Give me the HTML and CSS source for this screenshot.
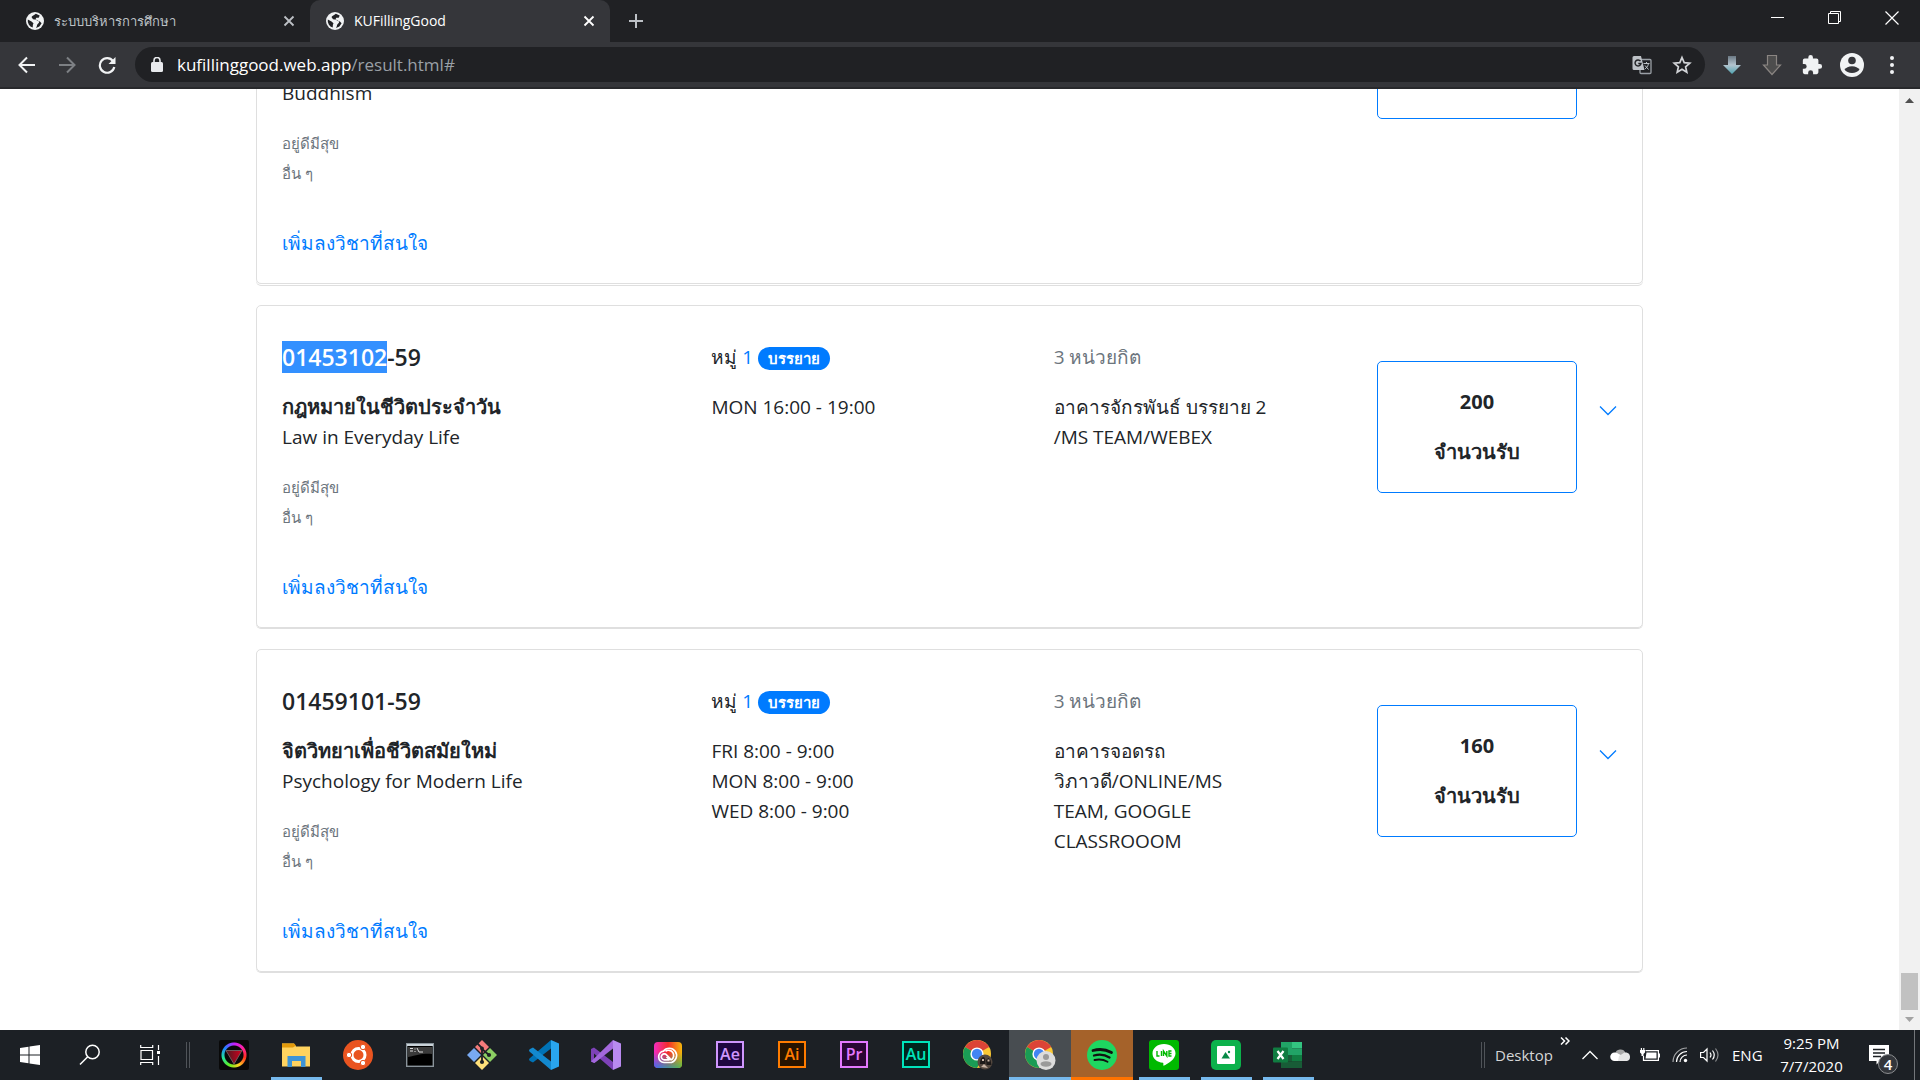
FILE: index.html
```
<!DOCTYPE html>
<html lang="th">
<head>
<meta charset="utf-8">
<title>KUFillingGood</title>
<link rel="stylesheet" href="styles.css">
</head>
<body>
<svg class="defs" width="0" height="0" aria-hidden="true">
  <symbol id="globe" viewBox="0 0 18 18"><circle cx="9" cy="9" r="9" fill="#f1f3f4"/><path d="M9.800 1.800c-1 1.400-3.300 1.400-4.300 3.200l1.500 2.200 3.500.6c1.600.6 2.500 1.500 2.500 3-1.200 1-2 1.700-2.200 3.500l-.8 1.800 3.400-1.600 2.200-3.200-1.700-1.700c-1-.6-2.300-.4-3.200-1.300l-1.200-1 .8-1.500h2.400l1-2.300zM1.800 7.500l3.700 2 2 1.700-.6 1.600-.2 2.700A7.200 7.200 0 0 1 1.800 7.500z" fill="#202124"/></symbol>
  <symbol id="close" viewBox="0 0 12 12"><path d="M1.500 1.500l9 9M10.500 1.500l-9 9" stroke="currentColor" stroke-width="1.800"/></symbol>
  <symbol id="chev" viewBox="0 0 18 12"><path d="M1 1.500l8 8 8-8" fill="none" stroke="currentColor" stroke-width="1.300"/></symbol>
  <symbol id="chrome" viewBox="0 0 30 30"><circle cx="14" cy="14" r="14" fill="#fbc934"/><path d="M14 14L1.900 7A14 14 0 0 1 26.100 7z" fill="#dc4437"/><path d="M1.900 7A14 14 0 0 0 14 28L20 17.500 14 14z" fill="#1a9c55"/><path d="M14 7h12.200l-2-2.600H9z" fill="#dc4437"/><circle cx="14" cy="14" r="6.600" fill="#fff"/><circle cx="14" cy="14" r="5.200" fill="#4285f4"/></symbol>
</svg>

<header class="browser">
  <div class="tabs">
    <div class="tab">
      <svg class="favicon"><use href="#globe"/></svg>
      <span class="tab-title">ระบบบริหารการศึกษา</span>
      <button class="tab-close" aria-label="Close tab"><svg width="12" height="12"><use href="#close"/></svg></button>
    </div>
    <div class="tab tab-active">
      <svg class="favicon"><use href="#globe"/></svg>
      <span class="tab-title">KUFillingGood</span>
      <button class="tab-close" aria-label="Close tab"><svg width="12" height="12"><use href="#close"/></svg></button>
    </div>
    <button class="new-tab" aria-label="New tab"><svg width="16" height="16" viewBox="0 0 16 16"><path d="M8 1v14M1 8h14" stroke="#bdc1c6" stroke-width="2"/></svg></button>
    <div class="window-buttons">
      <button aria-label="Minimize"><svg width="13" height="13"><path d="M0 5.500h13" stroke="#fff"/></svg></button>
      <button aria-label="Restore"><svg width="14" height="14"><path d="M.5 2.500h10v10H.5zM2.500 2.500v-2h10v10h-2" fill="none" stroke="#fff"/></svg></button>
      <button aria-label="Close"><svg width="14" height="14"><path d="M.5 .5l13 13M13.500 .5l-13 13" stroke="#fff" stroke-width="1.200"/></svg></button>
    </div>
  </div>
  <div class="toolbar">
    <button class="tool" aria-label="Back"><svg width="18" height="18" viewBox="0 0 18 18"><path d="M17 9H2M9 1.500L1.500 9 9 16.500" fill="none" stroke="#f1f3f4" stroke-width="2"/></svg></button>
    <button class="tool" aria-label="Forward"><svg width="18" height="18" viewBox="0 0 18 18"><path d="M1 9h15M9 1.500L16.500 9 9 16.500" fill="none" stroke="#7d8084" stroke-width="2"/></svg></button>
    <button class="tool" aria-label="Reload"><svg width="18" height="18" viewBox="0 0 18 18"><path d="M15 5A7.300 7.300 0 1 0 16.300 11" fill="none" stroke="#f1f3f4" stroke-width="2.200"/><path d="M17.500 1v7h-7z" fill="#f1f3f4"/></svg></button>
    <div class="omnibox">
      <svg width="12" height="15" viewBox="0 0 12 15"><rect y="5" width="12" height="10" rx="1.500" fill="#e8eaed"/><path d="M3 6V3.500a3 3 0 0 1 6 0V6" fill="none" stroke="#e8eaed" stroke-width="1.600"/></svg>
      <span class="url">kufillinggood.web.app<span class="url-path">/result.html#</span></span>
      <button class="tool" aria-label="Translate"><svg width="20" height="20" viewBox="0 0 20 20"><rect x="8" y="4.500" width="11" height="14" rx="1" fill="none" stroke="#9aa0a6" stroke-width="1.300"/><path d="M2 1h7l3.500 14H2a1.500 1.500 0 0 1-1.500-1.500v-11A1.500 1.500 0 0 1 2 1z" fill="#bdc1c6"/><path d="M8.500 6.200A3 3 0 1 0 9 8.500H6.300" fill="none" stroke="#202124" stroke-width="1.400"/><path d="M11.500 8.500h6M14.500 7v1.500M16.500 8.500c-.5 3-2.500 4.500-3.500 5.500M13 10.500l3.500 4" fill="none" stroke="#bdc1c6"/></svg></button>
      <button class="tool" aria-label="Bookmark"><svg width="20" height="20" viewBox="0 0 20 20"><path d="M10 2.500l2.200 5.100 5.600.5-4.200 3.700 1.200 5.400-4.800-2.900-4.800 2.900 1.200-5.400L2.200 8.100l5.600-.5z" fill="none" stroke="#d2d4d7" stroke-width="1.700"/></svg></button>
    </div>
    <button class="tool" aria-label="Download"><svg width="20" height="20" viewBox="0 0 20 20"><defs><linearGradient id="dl" x1="0" y1="0" x2="0" y2="1"><stop offset="0" stop-color="#6b7883"/><stop offset=".5" stop-color="#b3c4cf"/><stop offset="1" stop-color="#4fa3b0"/></linearGradient></defs><path d="M6 1h8v9h5l-9 9-9-9h5z" fill="url(#dl)"/></svg></button>
    <button class="tool" aria-label="Downloads"><svg width="20" height="22" viewBox="0 0 20 22"><path d="M5.500 1.500h9V11h4L10 20.500 1.500 11h4z" fill="#4d4d4d" stroke="#8a8582" stroke-width="1.200"/></svg></button>
    <button class="tool" aria-label="Extensions"><svg width="22" height="22" viewBox="0 0 24 24"><path d="M20.500 11H19V7a2 2 0 0 0-2-2h-4V3.500a2.500 2.500 0 0 0-5 0V5H4a2 2 0 0 0-2 2v3.800h1.500a2.700 2.700 0 0 1 0 5.400H2V20a2 2 0 0 0 2 2h3.800v-1.500a2.700 2.700 0 0 1 5.400 0V22H17a2 2 0 0 0 2-2v-4h1.500a2.500 2.500 0 0 0 0-5z" fill="#f1f3f4"/></svg></button>
    <button class="tool" aria-label="Profile"><svg width="24" height="24" viewBox="0 0 24 24"><circle cx="12" cy="12" r="12" fill="#f1f3f4"/><circle cx="12" cy="7.500" r="3.800" fill="#35363a"/><path d="M4.500 16.500c1.500-2 4-3.300 7.500-3.300s6 1.300 7.500 3.300c-1.500 2.200-4.200 3.500-7.500 3.500s-6-1.300-7.500-3.500z" fill="#35363a"/></svg></button>
    <button class="tool" aria-label="Menu"><svg width="4" height="18"><g fill="#f1f3f4"><circle cx="2" cy="2" r="2"/><circle cx="2" cy="9" r="2"/><circle cx="2" cy="16" r="2"/></g></svg></button>
  </div>
</header>

<div class="viewport">
  <main class="results">
    <article class="card card-long">
      <div class="course">
        <p class="name">Buddhism</p>
        <p class="tags">อยู่ดีมีสุข<br>อื่น ๆ</p>
        <a class="add" href="#">เพิ่มลงวิชาที่สนใจ</a>
      </div>
      <div class="section"></div>
      <div class="place"></div>
      <div class="seats"></div>
    </article>

    <article class="card">
      <div class="course">
        <h2 class="code"><mark>01453102</mark>-59</h2>
        <p class="name"><b>กฎหมายในชีวิตประจำวัน</b><br>Law in Everyday Life</p>
        <p class="tags">อยู่ดีมีสุข<br>อื่น ๆ</p>
        <a class="add" href="#">เพิ่มลงวิชาที่สนใจ</a>
      </div>
      <div class="section">
        <p class="head">หมู่ <span class="num">1</span> <span class="badge">บรรยาย</span></p>
        <p>MON 16:00 - 19:00</p>
      </div>
      <div class="place">
        <p class="head muted">3 หน่วยกิต</p>
        <p>อาคารจักรพันธ์ บรรยาย 2<br>/MS TEAM/WEBEX</p>
      </div>
      <div class="seats"><b>200</b><b>จำนวนรับ</b></div>
      <button class="expand" aria-label="Details"><svg width="18" height="12"><use href="#chev"/></svg></button>
    </article>

    <article class="card">
      <div class="course">
        <h2 class="code">01459101-59</h2>
        <p class="name"><b>จิตวิทยาเพื่อชีวิตสมัยใหม่</b><br>Psychology for Modern Life</p>
        <p class="tags">อยู่ดีมีสุข<br>อื่น ๆ</p>
        <a class="add" href="#">เพิ่มลงวิชาที่สนใจ</a>
      </div>
      <div class="section">
        <p class="head">หมู่ <span class="num">1</span> <span class="badge">บรรยาย</span></p>
        <p>FRI 8:00 - 9:00<br>MON 8:00 - 9:00<br>WED 8:00 - 9:00</p>
      </div>
      <div class="place">
        <p class="head muted">3 หน่วยกิต</p>
        <p>อาคารจอดรถ<br>วิภาวดี/ONLINE/MS<br>TEAM, GOOGLE<br>CLASSROOOM</p>
      </div>
      <div class="seats"><b>160</b><b>จำนวนรับ</b></div>
      <button class="expand" aria-label="Details"><svg width="18" height="12"><use href="#chev"/></svg></button>
    </article>
  </main>
  <div class="scrollbar" aria-hidden="true">
    <svg width="9" height="5"><path d="M0 5L4.500 0 9 5z" fill="#505050"/></svg>
    <div class="thumb"></div>
    <svg width="9" height="5"><path d="M0 0l4.500 5L9 0z" fill="#a3a3a3"/></svg>
  </div>
</div>

<footer class="taskbar">
  <button class="task task-system" aria-label="Start"><svg width="20" height="20" viewBox="0 0 20 20"><path d="M0 3l8.500-1.200v7.700H0zM9.500 1.600L20 0v9.500H9.500zM0 10.500h8.500v7.700L0 17zM9.500 10.500H20V20L9.500 18.400z" fill="#fff"/></svg></button>
  <button class="task task-system" aria-label="Search"><svg width="22" height="22" viewBox="0 0 22 22"><circle cx="13.500" cy="8" r="6.700" fill="none" stroke="#fff" stroke-width="1.500"/><path d="M8.700 12.800L1 20.500" stroke="#fff" stroke-width="1.500"/></svg></button>
  <button class="task task-system" aria-label="Task view"><svg width="20" height="20" viewBox="0 0 20 20"><path d="M1 5.500h11.500v9H1zM.7 0v2.500h12V0M.7 20v-2.500h12V20M18.500 0v5M18.500 11v9" fill="none" stroke="#fff" stroke-width="1.200"/><path d="M17 6h3v3h-3z" fill="#fff"/></svg></button>
  <div class="grip"></div>
  <button class="task" aria-label="Colour wheel"><span class="wheel"><svg width="18" height="16" viewBox="0 0 18 16"><defs><linearGradient id="tri"><stop offset="0" stop-color="#4a1a20"/><stop offset="1" stop-color="#d4001e"/></linearGradient></defs><path d="M1 1.500h16L9 15z" fill="url(#tri)" stroke="#6d5a5c"/></svg></span></button>
  <button class="task task-open" aria-label="File Explorer"><svg width="30" height="26" viewBox="0 0 30 26"><path d="M1 1.500h12l2 3H29v20H1z" fill="#ffd35f"/><path d="M1 1.500h12l2 2-3 2H1z" fill="#e29a0b"/><path d="M6.500 25V14h18v11H20v-6h-9v6z" fill="#3e94d6"/></svg></button>
  <button class="task" aria-label="Ubuntu"><svg width="30" height="30" viewBox="0 0 30 30"><circle cx="15" cy="15" r="15" fill="#e95420"/><circle cx="15.500" cy="15" r="6.500" fill="none" stroke="#fff" stroke-width="3"/><g fill="#fff" stroke="#e95420" stroke-width="1"><circle cx="6" cy="15" r="2.700"/><circle cx="20" cy="7" r="2.700"/><circle cx="20" cy="23" r="2.700"/></g></svg></button>
  <button class="task" aria-label="Command Prompt"><svg width="28" height="24" viewBox="0 0 28 24"><rect x=".7" y=".7" width="26.600" height="22.600" fill="#000" stroke="#8a949b" stroke-width="1.400"/><path d="M1 1h26v2H1z" fill="#c9d2d8"/><path d="M2 4h24v7c-9-1-14 1-24 3z" fill="#3a3a3a"/><path d="M4 5.500h3M4 8h3M9 5.500v1M9 8v1M11 5l2 4h4" fill="none" stroke="#ddd"/></svg></button>
  <button class="task" aria-label="Git"><svg width="30" height="30" viewBox="0 0 30 30"><path d="M15 0l7 7-7 7-7-7z" fill="#f47b7b"/><path d="M23 8l7 7-7 7-7-7z" fill="#8ccf63"/><path d="M7 8l7 7-7 7-7-7z" fill="#78a9f2"/><path d="M15 16l7 7-7 7-7-7z" fill="#ffe07a"/><path d="M10 3l5 5v14M15 9l7 6" stroke="#1e2125" stroke-width="1.800" fill="none"/><circle cx="15" cy="8.500" r="1.900" fill="#1e2125"/><circle cx="22" cy="15" r="2.100" fill="#1e2125"/><circle cx="15" cy="22" r="2.100" fill="#1e2125"/></svg></button>
  <button class="task" aria-label="Visual Studio Code"><svg width="30" height="30" viewBox="0 0 30 30"><path d="M22 0v8.500L4 22.500 1 21c-1.300-1-1.300-2 0-3z" fill="#0072b5"/><path d="M22 30v-8.500L4 7.500 1 9c-1.300 1-1.300 2 0 3z" fill="#1389cf"/><path d="M22 0l8 3.500v23L22 30z" fill="#29a5ee"/></svg></button>
  <button class="task" aria-label="Visual Studio"><svg width="30" height="30" viewBox="0 0 30 30"><path d="M0 9l3-1.500L22 22v8L3 13.500v6.500l3.500-4 2.500 2.500L3 23l-3-1.500z" fill="#7d42b8"/><path d="M22 0v8.500L3.500 23 0 21.500z" fill="#a368dc"/><path d="M22 0l8 3.500v23L22 30z" fill="#b98af0"/></svg></button>
  <button class="task" aria-label="Creative Cloud"><svg width="28" height="26" viewBox="0 0 28 26"><defs><linearGradient id="ccx"><stop offset="0" stop-color="#f42cc0"/><stop offset=".5" stop-color="#f52c2c"/><stop offset="1" stop-color="#f5b80c"/></linearGradient><linearGradient id="ccy" x1="0" y1="0" x2="1" y2="0"><stop offset="0" stop-color="#3d6cf5"/><stop offset="1" stop-color="#55b848"/></linearGradient><linearGradient id="ccf" x1="0" y1="0" x2="0" y2="1"><stop offset=".4" stop-color="#000"/><stop offset="1" stop-color="#fff"/></linearGradient><mask id="ccm"><rect width="28" height="26" fill="url(#ccf)"/></mask></defs><rect width="28" height="26" rx="4" fill="url(#ccx)"/><rect width="28" height="26" rx="4" fill="url(#ccy)" mask="url(#ccm)"/><g fill="none" stroke="#fff" stroke-width="1.700"><path d="M10 20.500a5.700 5.700 0 0 1-.6-11.300A7.300 7.300 0 1 1 17.500 20.500z"/><path d="M15.500 17.800h-5.300a3 3 0 1 1 2.300-5l4 4.200"/><path d="M11.500 9.200a4.700 4.700 0 1 1 6 8.500c-2 .4-3.500-1-5-2.700"/></g></svg></button>
  <button class="task" aria-label="After Effects"><span class="adobe adobe-ae">Ae</span></button>
  <button class="task" aria-label="Illustrator"><span class="adobe adobe-ai">Ai</span></button>
  <button class="task" aria-label="Premiere Pro"><span class="adobe adobe-pr">Pr</span></button>
  <button class="task" aria-label="Audition"><span class="adobe adobe-au">Au</span></button>
  <button class="task" aria-label="Chrome, first profile"><svg width="30" height="30" viewBox="0 0 30 30"><use href="#chrome" width="30" height="30"/><circle cx="22" cy="22" r="7.500" fill="#54483f"/><path d="M17 24c0-5 2-7 3.500-7s2 3 2 7zM23 20l2.500-2 2 2 1 5h-5z" fill="#1d1a19"/><path d="M19 19h2v2h-2zM24.500 19.500h2v2h-2zM18 27l3-3 4 4z" fill="#c9b5a6"/></svg></button>
  <button class="task task-active" aria-label="Chrome"><svg width="31" height="30" viewBox="0 0 31 30"><use href="#chrome" width="30" height="30"/><circle cx="21" cy="20.500" r="9.500" fill="#dcdcdc"/><circle cx="21" cy="17" r="3" fill="#9a9a9a"/><ellipse cx="21" cy="24" rx="5.500" ry="2.700" fill="#9a9a9a"/></svg></button>
  <button class="task task-alert" aria-label="Spotify"><svg width="30" height="30" viewBox="0 0 30 30"><circle cx="15" cy="15" r="15" fill="#1ed760"/><g fill="none" stroke="#111" stroke-linecap="round"><path d="M6 10.500c6-1.700 13-1 18.500 2" stroke-width="2.800"/><path d="M7 15.500c5-1.400 11-.8 15.500 2" stroke-width="2.300"/><path d="M7.500 20c4.500-1 9-.6 13 1.700" stroke-width="1.900"/></g></svg></button>
  <button class="task task-open" aria-label="LINE"><svg width="30" height="30" viewBox="0 0 30 30"><rect width="30" height="30" rx="3" fill="#00b900"/><path d="M15 4C8.500 4 3.500 8.200 3.500 13.500c0 5 4.500 8.700 10.500 9.300.8.300 0 2 .5 3 4.500-2 12-6.500 12-12.300C26.500 8.200 21.500 4 15 4z" fill="#fff"/><path d="M8 11v5h2.500M12.500 11v5M14.500 16v-5l3.300 5v-5M22.500 11H20v5h2.500M20 13.500h2.500" fill="none" stroke="#00b900" stroke-width="1.400"/></svg></button>
  <button class="task task-open" aria-label="Photos"><svg width="30" height="30" viewBox="0 0 30 30"><rect width="30" height="30" rx="5" fill="#0cb14b"/><rect x="6" y="6" width="18" height="18" rx="1" fill="#fff"/><path d="M10.500 18.500l4-6.500 4.500 6.500z" fill="#078a46"/><circle cx="18" cy="12" r="1.200" fill="#078a46"/></svg></button>
  <button class="task task-open" aria-label="Excel"><svg width="30" height="28" viewBox="0 0 30 28"><path d="M8 1h11v13H8z" fill="#21a366"/><path d="M19 1h10v6.500H19z" fill="#33c481"/><path d="M19 7.500h10V14H19z" fill="#21a366"/><path d="M8 14h11v6.500H8z" fill="#185c37"/><path d="M19 14h10v6.500H19z" fill="#107c41"/><path d="M8 20.500h21V27H8z" fill="#185c37"/><rect y="6.500" width="15" height="15" rx="1" fill="#107c41"/><path d="M4.500 10l6 8M10.500 10l-6 8" stroke="#fff" stroke-width="2.200"/></svg></button>

  <div class="tray">
    <div class="grip"></div>
    <span class="tray-label">Desktop</span>
    <button class="more" aria-label="More"><svg width="10" height="8" viewBox="0 0 10 8"><path d="M1 .5L4.500 4 1 7.500M5.500 .5L9 4 5.500 7.500" fill="none" stroke="#fff" stroke-width="1.500"/></svg></button>
    <button class="tray-icon" aria-label="Hidden icons"><svg width="16" height="10" viewBox="0 0 16 10"><path d="M.5 9L8 1.500 15.500 9" fill="none" stroke="#fff" stroke-width="1.300"/></svg></button>
    <button class="tray-icon" aria-label="OneDrive"><svg width="20" height="14" viewBox="0 0 20 14"><path d="M5 6a5.500 5.500 0 0 1 10.500-1L9 9z" fill="#a9a9a9"/><path d="M4.500 4.500c2 0 3 .5 10 5l3 3.500H4.500a4.200 4.200 0 0 1 0-8.500z" fill="#fff"/><path d="M9 8l5.500-3.500c4-.5 5.500 2 5.500 4.500a4 4 0 0 1-4 4H8z" fill="#e6e6e6"/></svg></button>
    <button class="tray-icon" aria-label="Battery"><svg width="20" height="14" viewBox="0 0 20 14"><path d="M5.500 2.600h12.900v9.800H3.500V8" fill="none" stroke="#fff" stroke-width="1.200"/><path d="M6.500 4.500h10v6h-11zM19 5.500h1v4h-1zM0 2h5v2.500L3.500 6v2h-2V6L0 4.500zM.8 0H2v2H.8zM3.200 0h1.200v2H3.200z" fill="#fff"/></svg></button>
    <button class="tray-icon" aria-label="Wi-Fi"><svg width="16" height="16" viewBox="0 0 16 16"><g fill="none" stroke="#fff" stroke-width="1.200"><path d="M1 15A14 14 0 0 1 15 1" opacity=".6"/><path d="M4.500 15A10.500 10.500 0 0 1 15 4.500"/><path d="M8 15a7 7 0 0 1 7-7"/></g><circle cx="13.500" cy="13.500" r="1.700" fill="#fff"/></svg></button>
    <button class="tray-icon" aria-label="Volume"><svg width="20" height="16" viewBox="0 0 20 16"><g fill="none" stroke="#fff" stroke-width="1.200"><path d="M.6 5.500h2.900L7 2v12l-3.500-3.500H.6zM10 5.500q2 2.500 0 5M12.500 3.500q3.500 4.500 0 9"/><path d="M15.500 1.500q5 6.500 0 13" opacity=".5"/></g></svg></button>
    <span class="lang">ENG</span>
    <div class="clock"><span>9:25 PM</span><span>7/7/2020</span></div>
    <button class="notify" aria-label="4 notifications"><svg width="20" height="20" viewBox="0 0 20 20"><path d="M0 0h20v16H11l-3.500 3.500V16H0z" fill="#fff"/><path d="M4 4.500h12M4 8h12M4 11.500h8" stroke="#1d2024" stroke-width="1.300"/></svg><span class="count">4</span></button>
  </div>
</footer>
</body>
</html>
```
FILE: styles.css
```
* { box-sizing: border-box; }

body {
  margin: 0;
  height: 100vh;
  display: flex;
  flex-direction: column;
  overflow: hidden;
  background: #fff;
  color: #212529;
  font-family: "Segoe UI", "Open Sans", "Noto Sans", sans-serif;
  font-size: 19px;
  line-height: 30px;
}

p, h2 { margin: 0; }
a { color: #007bff; text-decoration: none; }
svg { display: block; flex: none; }

button {
  display: flex;
  align-items: center;
  justify-content: center;
  padding: 0;
  border: 0;
  background: none;
  color: inherit;
  font: inherit;
}

.defs { position: absolute; }

/* Browser frame */
.browser {
  flex: none;
  background: #202124;
  border-bottom: 2px solid #28292c;
}

.tabs {
  display: flex;
  height: 42px;
  padding-left: 10px;
}

.tab {
  display: flex;
  align-items: center;
  width: 300px;
  padding: 0 13px 0 16px;
  color: #bdc1c6;
  font-size: 14px;
}

.tab:first-child { font-size: 13px; }

.tab-active {
  border-radius: 10px 10px 0 0;
  background: #35363a;
  color: #fff;
}

.favicon {
  width: 18px;
  height: 18px;
}

.tab-title { flex: 1; padding-left: 10px; }
.tab-close { width: 16px; height: 24px; }
.new-tab { width: 52px; }
.window-buttons { display: flex; margin-left: auto; padding-bottom: 6px; }
.window-buttons button { width: 57px; }

.toolbar {
  display: flex;
  align-items: center;
  height: 45px;
  padding: 0 8px 0 7px;
  background: #35363a;
}

.tool { width: 40px; height: 34px; }

.omnibox {
  flex: 1;
  display: flex;
  align-items: center;
  height: 35px;
  margin: 0 7px 0 8px;
  padding: 0 3px 0 16px;
  border-radius: 18px;
  background: #202124;
}

.url {
  flex: 1;
  padding-left: 14px;
  color: #fff;
  font-size: 17px;
}

.url-path { color: #9aa0a6; }

/* Page */
.viewport {
  flex: 1;
  min-height: 0;
  display: flex;
}

.results {
  flex: 1;
  display: flex;
  flex-direction: column;
  align-items: center;
  justify-content: flex-end;
  gap: 21px;
  overflow: hidden;
  padding-bottom: 58px;
}

.card {
  flex: none;
  display: grid;
  grid-template-columns: 429fr 342fr 323fr 200px 40fr;
  width: 100%;
  max-width: 1387px;
  padding: 36px 25px 25px;
  border: 1px solid #dfdfdf;
  border-radius: 5px;
  box-shadow: 0 1px 0 #dfdfdf;
}

.card-long {
  min-height: 353px;
  box-shadow: 0 1px 0 #fff, 0 2px 0 #dfdfdf;
}

.card b { font-size: 20px; }

.course {
  display: flex;
  flex-direction: column;
  align-items: flex-start;
  justify-content: flex-end;
}

.code {
  margin-bottom: 20px;
  font-size: 23px;
  font-weight: 600;
}

mark {
  background: #3390ff;
  color: #fff;
}

.name { margin-bottom: 20px; }

.tags {
  margin-bottom: 40px;
  color: #6c757d;
  font-size: 15px;
}

.head { margin-bottom: 20px; }
.muted { color: #6c757d; }
.num { color: #007bff; }

.badge {
  display: inline-block;
  padding: 0 10px;
  border-radius: 12px;
  background: #007bff;
  color: #fff;
  font-size: 15px;
  font-weight: 700;
  line-height: 23px;
}

.seats {
  display: flex;
  flex-direction: column;
  align-items: center;
  gap: 20px;
  height: 132px;
  margin-top: 19px;
  padding: 25px 0;
  border: 1px solid #007bff;
  border-radius: 5px;
}

.expand {
  justify-self: end;
  align-self: start;
  height: 20px;
  margin-top: 59px;
  color: #007bff;
}

.scrollbar {
  display: flex;
  flex-direction: column;
  align-items: center;
  width: 21px;
  padding: 9px 2px 8px;
  background: #f1f1f1;
}

.thumb {
  width: 17px;
  height: 37px;
  margin: auto 0 7px;
  background: #c1c1c1;
}

/* Taskbar */
.taskbar {
  flex: none;
  display: flex;
  height: 50px;
  background: #1c2025;
  color: #fff;
}

.task {
  width: 62px;
  border: 0 solid transparent;
  border-width: 3px 0;
}

.task-system { width: 60px; }

.task-open {
  background: linear-gradient(#76b9ed, #76b9ed) center bottom / 51px 3px no-repeat border-box;
}

.task-active {
  border-top-color: #484d51;
  border-bottom-color: #76b9ed;
  background: #484d51;
}

.task-alert {
  border-top-color: #a5622a;
  border-bottom-color: #ff7300;
  background: #a5622a;
}

.grip {
  width: 4px;
  height: 26px;
  margin: 12px 13px 0 6px;
  border: 1px solid #505459;
  border-width: 0 1px;
}

.wheel {
  display: flex;
  align-items: center;
  justify-content: center;
  width: 30px;
  height: 30px;
  padding-top: 3px;
  border-radius: 2px;
  background:
    radial-gradient(circle, #090909 9px, transparent 10px 12px, #090909 13px),
    conic-gradient(#c020ff, #ff20a0, #ff3020, #ffd020, #60f020, #20e0a0, #2080ff, #c020ff);
}

.adobe {
  width: 28px;
  height: 27px;
  margin-bottom: 2px;
  border: 2px solid;
  font-size: 16px;
  font-weight: 600;
  line-height: 22px;
}

.adobe-ae { background: #1f0740; color: #cf96fd; }
.adobe-ai { background: #261300; color: #ff7c00; }
.adobe-pr { background: #2a0634; color: #e478ff; }
.adobe-au { background: #00241d; color: #00e4bb; }

.tray {
  display: flex;
  align-items: center;
  margin-left: auto;
  padding-right: 5px;
  font-size: 15px;
  line-height: 23px;
}

.tray .grip { margin: 0 10px 0 0; }
.tray-label { width: 60px; color: #d5d6d7; }
.more { align-self: flex-start; width: 20px; height: 22px; }
.tray-icon { width: 30px; height: 34px; }
.lang { width: 54px; padding-left: 7px; }

.clock {
  display: flex;
  flex-direction: column;
  align-items: center;
  width: 65px;
}

.notify {
  position: relative;
  width: 71px;
  height: 50px;
  border-right: 1px solid #73767a;
}

.count {
  position: absolute;
  left: 34px;
  top: 24px;
  width: 20px;
  height: 20px;
  border: 1px solid #8b8d90;
  border-radius: 50%;
  background: #33363b;
  font-weight: 600;
  line-height: 18px;
}
```
